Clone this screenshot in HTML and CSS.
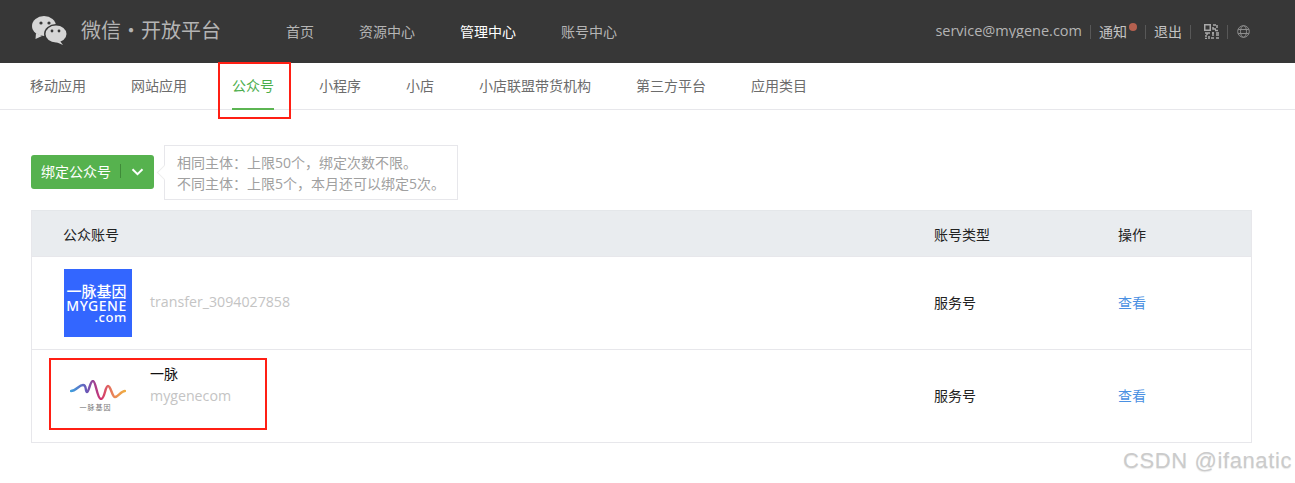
FILE: index.html
```html
<!DOCTYPE html>
<html lang="zh-CN">
<head>
<meta charset="utf-8">
<title>微信开放平台</title>
<link rel="stylesheet" href="styles.css">
</head>
<body>
<header class="topbar">
  <div class="brand">
    <svg class="brand-icon" width="37" height="30" viewBox="0 0 37 30">
      <path d="M5 17 L4.500 23 L11 20 Z" fill="#d6d6d6"/>
      <ellipse cx="13" cy="10" rx="12" ry="10" fill="#d6d6d6"/>
      <ellipse cx="25" cy="18" rx="12" ry="10" fill="#373737"/>
      <ellipse cx="25" cy="18" rx="10.500" ry="8.500" fill="#d6d6d6"/>
      <path d="M29 25 L32 29 L25 26 Z" fill="#d6d6d6"/>
      <circle cx="10" cy="7" r="1.600" fill="#373737"/>
      <circle cx="18" cy="7" r="1.600" fill="#373737"/>
      <circle cx="21" cy="15" r="1.400" fill="#373737"/>
      <circle cx="28" cy="15" r="1.400" fill="#373737"/>
    </svg>
    <span class="brand-text">微信・开放平台</span>
  </div>
  <nav class="mainnav">
    <a>首页</a><a>资源中心</a><a class="current">管理中心</a><a>账号中心</a>
  </nav>
  <div class="userbar">
    <span class="email">service@mygene.com</span>
    <span class="sep"></span>
    <span class="notice">通知<i class="dot"></i></span>
    <span class="sep"></span>
    <span>退出</span>
    <span class="sep"></span>
    <svg class="qr" width="15" height="15" viewBox="0 0 15 15" fill="none" stroke="#a9a9a9">
      <rect x="0.750" y="0.750" width="5.500" height="5.500" stroke-width="1.500"/>
      <path stroke-width="1.500" d="M9 1h3M13 1v3M9 3v2h3M11 6.500h3M1 9h5M3 9v2M1 12h2M5 12v3M1 14.500h2M8 9h2M9 8v4M12 9h3M12 11h3M7 14h3M12 14h3"/>
    </svg>
    <span class="sep"></span>
    <svg class="globe" width="13" height="13" viewBox="0 0 13 13" fill="none" stroke="#8d8d8d">
      <circle cx="6.500" cy="6.500" r="5.800"/>
      <ellipse cx="6.500" cy="6.500" rx="3" ry="5.800"/>
      <path d="M1.200 4.500h10.600M1.200 8.500h10.600"/>
    </svg>
  </div>
</header>
<nav class="subnav">
  <a>移动应用</a><a>网站应用</a><a class="active">公众号</a><a>小程序</a><a>小店</a><a>小店联盟带货机构</a><a>第三方平台</a><a>应用类目</a>
</nav>
<main class="content">
  <div class="actions">
    <button class="bind" type="button">
      <span class="bind-label">绑定公众号</span>
      <span class="bind-arrow">
        <svg width="13" height="8" viewBox="0 0 13 8" fill="none" stroke="#fff" stroke-width="2"><path d="M1.500 1.200 6.500 6.200l5-5"/></svg>
      </span>
    </button>
    <div class="tip">
      <p>相同主体：上限50个，绑定次数不限。</p>
      <p>不同主体：上限5个，本月还可以绑定5次。</p>
    </div>
  </div>
  <div class="table">
    <div class="row head">
      <div class="col-name">公众账号</div>
      <div class="col-type">账号类型</div>
      <div class="col-op">操作</div>
    </div>
    <div class="row">
      <div class="col-name account">
        <div class="logo logo-blue">
          <span class="l1">一脉基因</span>
          <span class="l2">MYGENE</span>
          <span class="l3">.com</span>
        </div>
        <div class="meta"><span class="id">transfer_3094027858</span></div>
      </div>
      <div class="col-type">服务号</div>
      <div class="col-op"><a>查看</a></div>
    </div>
    <div class="row">
      <div class="col-name account">
        <div class="logo logo-wave">
          <svg width="56" height="20" viewBox="0 0 56 20" fill="none" stroke-width="2.400" stroke-linecap="round">
            <defs>
              <linearGradient id="wave" gradientUnits="userSpaceOnUse" x1="0" x2="56" y1="0" y2="0">
                <stop offset="0" stop-color="#3fa4e0"/>
                <stop offset="0.300" stop-color="#6a58b8"/>
                <stop offset="0.550" stop-color="#d0306f"/>
                <stop offset="0.750" stop-color="#e8805a"/>
                <stop offset="1" stop-color="#f0b040"/>
              </linearGradient>
            </defs>
            <path stroke="url(#wave)" d="M1 11C6 11 9 5 13 5S15 12 17 12S20 1 23 1S27 19 31 19S35 6 38 6S42 17 45 17S51 11 55 11"/>
          </svg>
          <span class="wave-text">一脉基因</span>
        </div>
        <div class="meta meta-top">
          <span class="nick">一脉</span>
          <span class="id">mygenecom</span>
        </div>
      </div>
      <div class="col-type">服务号</div>
      <div class="col-op"><a>查看</a></div>
    </div>
  </div>
</main>
<div class="mark mark-tab"></div>
<div class="mark mark-row"></div>
<div class="watermark">CSDN @ifanatic</div>
</body>
</html>
```
FILE: styles.css
```css
* { box-sizing: border-box; }
html, body { margin: 0; padding: 0; }
body {
  position: relative;
  height: 483px;
  overflow: hidden;
  background: #fff;
  color: #353535;
  font-family: "Open Sans", "Noto Sans CJK SC", sans-serif;
  font-size: 14px;
}
p { margin: 0; }

.topbar {
  display: flex;
  align-items: center;
  height: 63px;
  padding: 0 45px 0 31px;
  background: #373737;
  color: #c8c8c8;
}
.brand { display: flex; align-items: center; width: 255px; }
.brand-icon { margin: -1px 13px 0 0; }
.brand-text { margin-top: -4px; font-size: 20px; color: #b4b4b4; }
.mainnav { display: flex; gap: 45px; margin-top: -2px; }
.mainnav a { color: #b5b5b5; font-size: 14px; }
.mainnav .current { color: #fff; }
.userbar { display: flex; align-items: center; margin-left: auto; color: #c4c4c4; font-size: 14px; }
.userbar > span:not(.sep):not(.email) { margin-top: -1px; }
.email {
  height: 15px;
  margin-top: -3px;
  overflow: hidden;
  font-size: 14.500px;
  line-height: 15px;
  color: #b4b4b4;
}
.sep { width: 1px; height: 14px; margin: 0 8px; background: #585858; }
.notice { position: relative; padding-right: 10px; }
.dot {
  position: absolute;
  top: 2px;
  right: 0;
  width: 8px;
  height: 8px;
  border-radius: 50%;
  background: #b5604f;
}
.qr { margin-left: 5px; }
.globe { margin-left: 1px; }

.subnav {
  display: flex;
  gap: 45px;
  height: 47px;
  padding-left: 30px;
  border-bottom: 1px solid #e7e7eb;
}
.subnav a {
  display: block;
  height: 47px;
  line-height: 46px;
  color: #6c6c6c;
}
.subnav .active {
  color: #4cae4c;
  border-bottom: 2px solid #5cb552;
}

.content { padding: 35px 43px 0 31px; }
.actions { display: flex; align-items: center; }
.bind {
  display: flex;
  align-items: center;
  width: 123px;
  height: 34px;
  margin-top: -1px;
  padding: 0 0 2px;
  border: 0;
  border-radius: 3px;
  background: #56b24e;
  color: #fff;
  font: inherit;
}
.bind-label { padding: 0 9px 0 10px; }
.bind-arrow {
  display: flex;
  align-items: center;
  justify-content: center;
  flex: 1;
  height: 14px;
  padding-top: 2px;
  border-left: 1px solid #3f8a39;
}
.tip {
  position: relative;
  width: 294px;
  height: 55px;
  margin-left: 10px;
  padding: 6px 12px;
  border: 1px solid #e7e7eb;
  color: #a0a0a0;
  font-size: 14px;
  line-height: 21px;
}
.tip::before {
  content: "";
  position: absolute;
  top: 21px;
  left: -6px;
  width: 10px;
  height: 10px;
  background: #fff;
  border-left: 1px solid #eeeeee;
  border-bottom: 1px solid #eeeeee;
  transform: rotate(45deg);
}

.table { width: 1221px; margin-top: 10px; border: 1px solid #e7e7eb; border-top-color: #e4e7ea; }
.row {
  display: flex;
  align-items: center;
  height: 93px;
  color: #222;
  border-top: 1px solid #e7e7eb;
}
.row.head { height: 45px; background: #e9ecef; border-top: 0; }
.col-name { flex: none; width: 902px; padding-left: 31px; }
.col-name.account { padding-left: 32px; }
.col-type { flex: none; width: 184px; }
.col-op { flex: none; }
.col-op a { color: #4a90e2; }
.row:not(.head) .col-type, .row:not(.head) .col-op { padding-bottom: 3px; }
.account { display: flex; align-items: center; }
.logo { flex: none; width: 68px; height: 68px; margin-right: 18px; }
.logo-blue {
  display: flex;
  flex-direction: column;
  align-items: stretch;
  padding: 15px 3px 0 0;
  background: #3366ff;
  color: #fff;
  text-align: center;
  line-height: 1;
}
.l1 { font-size: 15px; line-height: 15px; font-weight: 500; white-space: nowrap; }
.l2 { font-size: 14px; line-height: 13px; font-family: "Noto Sans", sans-serif; font-weight: 500; letter-spacing: 0.500px; white-space: nowrap; }
.l3 { font-size: 13px; line-height: 11px; text-align: right; padding-right: 2px; font-family: "Noto Sans", sans-serif; font-weight: 500; letter-spacing: 0.600px; }
.logo-wave { display: flex; flex-direction: column; align-items: center; justify-content: center; }
.wave-text { margin: 3px 5px 0 0; font-size: 7px; line-height: 9px; color: #777; letter-spacing: 1px; }
.meta { display: flex; flex-direction: column; padding-bottom: 2px; }
.meta-top { align-self: flex-start; margin-top: 1px; padding-bottom: 0; }
.nick { color: #111; line-height: 22px; }
.id { color: #c4c4c4; font-size: 14.200px; line-height: 22px; }

.mark { position: absolute; border: 2px solid #ff1f14; pointer-events: none; }
.mark-tab { left: 218px; top: 62px; width: 73px; height: 57px; }
.mark-row { left: 49px; top: 358px; width: 218px; height: 72px; }
.watermark {
  position: absolute;
  right: 3px;
  top: 448px;
  color: #cbcbcb;
  font-family: "Liberation Sans", sans-serif;
  font-size: 22px;
  letter-spacing: 0.600px;
  text-shadow: 0 1px 1px #e8e8e8;
}
```
